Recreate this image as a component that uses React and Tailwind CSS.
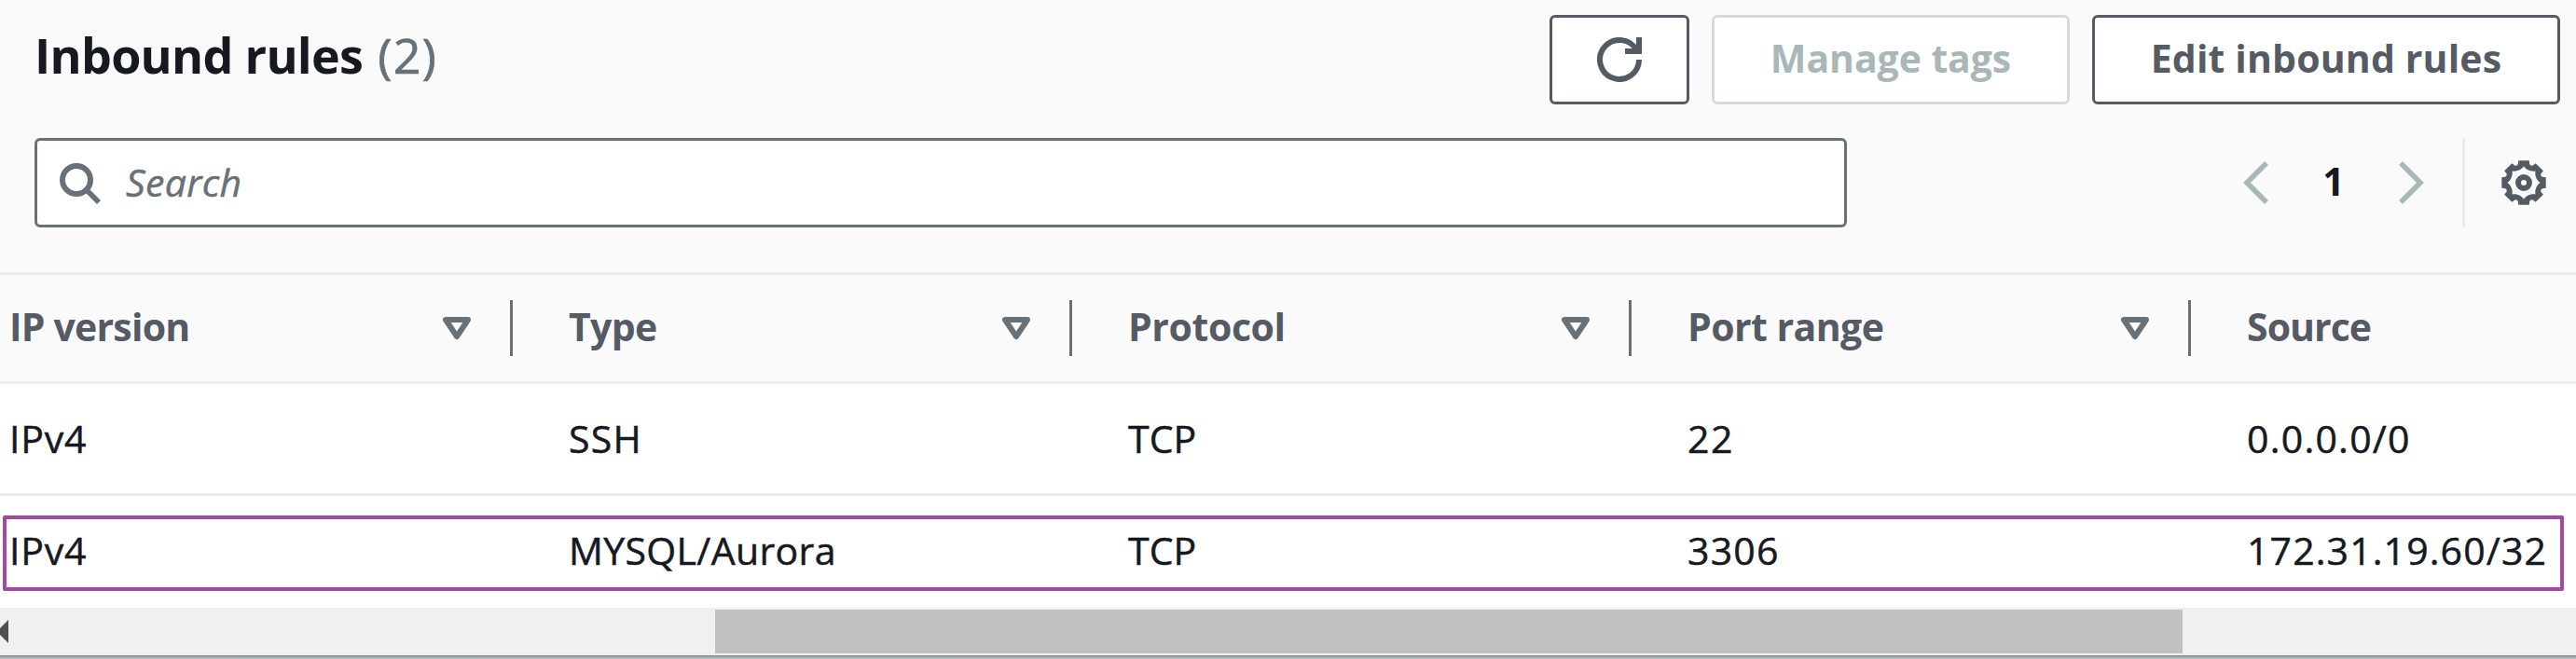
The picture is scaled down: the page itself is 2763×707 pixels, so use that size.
import React from "react";

const columns = [
  { label: "IP version", width: "w-[550px] pl-[10px]", tracking: "tracking-[-0.8px]" },
  { label: "Type", width: "w-[600px] pl-[60px]", tracking: "tracking-[-0.67px]" },
  { label: "Protocol", width: "w-[600px] pl-[60px]", tracking: "tracking-[-0.4px]" },
  { label: "Port range", width: "w-[600px] pl-[60px]", tracking: "tracking-[-0.55px]" },
  { label: "Source", width: "w-[413px] pl-[60px]", tracking: "tracking-[-0.95px]" },
];

const rows = [
  [
    { text: "IPv4", tracking: "tracking-[0.8px]" },
    { text: "SSH", tracking: "tracking-[1.3px]" },
    { text: "TCP", tracking: "tracking-[0.05px]" },
    { text: "22", tracking: "tracking-[1.5px]" },
    { text: "0.0.0.0/0", tracking: "tracking-[1.25px]" },
  ],
  [
    { text: "IPv4", tracking: "tracking-[0.8px]" },
    { text: "MYSQL/Aurora", tracking: "tracking-[0.35px]" },
    { text: "TCP", tracking: "tracking-[0.05px]" },
    { text: "3306", tracking: "tracking-[1.22px]" },
    { text: "172.31.19.60/32", tracking: "tracking-[1.12px]" },
  ],
];

const TEETH = [0, 1, 2, 3, 4, 5, 6, 7];

function rotated(k, x, y) {
  const a = (k * Math.PI) / 4;
  const px = 24 + x * Math.cos(a) - y * Math.sin(a);
  const py = 24 + x * Math.sin(a) + y * Math.cos(a);
  return px.toFixed(2) + " " + py.toFixed(2);
}

const gearOuter =
  TEETH.map(
    (k) =>
      (k === 0 ? "M" : "L") + rotated(k, -5.8, -23.7) +
      "L" + rotated(k, 5.8, -23.7) +
      "L" + rotated(k, 6.2, -20) +
      "Q" + rotated(k, 7.3, -17.6) + " " + rotated(k, 9.7, -18.5)
  ).join("") + "Z";

const gearInner =
  "M" + rotated(0, 0, -17.7) +
  TEETH.map(
    (k) => "C" + rotated(k, 2.5, -13.7) + " " + rotated(k, 7.9, -11.5) + " " + rotated(k + 1, 0, -17.7)
  ).join("") + "Z";

function GearIcon() {
  return (
    <svg className="size-12 shrink-0 text-[#545b64]" viewBox="0 0 48 48">
      <path d={gearOuter + gearInner} fill="currentColor" fillRule="evenodd" />
      <circle cx="24" cy="24" r="6" fill="none" stroke="currentColor" strokeWidth="6" />
    </svg>
  );
}

function RefreshIcon() {
  return (
    <svg className="size-12" viewBox="0 0 48 48" fill="none" stroke="currentColor" strokeWidth="6">
      <path d="M45 24A21 21 0 1 1 42.6 14.2" />
      <path d="M45 0V15H30" />
    </svg>
  );
}

function SearchIcon() {
  return (
    <svg className="size-12 shrink-0 text-[#687078]" viewBox="0 0 48 48" fill="none" stroke="currentColor" strokeWidth="6">
      <circle cx="21" cy="21" r="15" />
      <path d="M31 31L45 45" strokeWidth="5.6" />
    </svg>
  );
}

function Chevron({ d }) {
  return (
    <svg className="h-12 w-[30px] text-[#aab7b8]" viewBox="0 0 30 48" fill="none" stroke="currentColor" strokeWidth="5.6">
      <path d={d} />
    </svg>
  );
}

function SortIcon() {
  return (
    <svg className="h-[26px] w-8 text-[#687078]" viewBox="0 0 32 26" fill="none" stroke="currentColor" strokeWidth="6" strokeLinejoin="round">
      <path d="M4 4H28L16 22Z" />
    </svg>
  );
}

export default function App() {
  return (
    <div className="flex h-[707px] w-[2763px] flex-col overflow-hidden bg-white font-['Open_Sans',sans-serif] text-[41px] text-[#16191f]">
      <header className="flex h-[295px] shrink-0 flex-col border-b-[3px] border-[#eaeded] bg-[#fafafa] pt-4 pl-[37px]">
        <div className="flex h-24 items-start justify-between pr-[17px]">
          <h1 className="flex h-[86px] items-center gap-[16px] text-[52px] leading-[86px]">
            <span className="font-bold tracking-[-0.72px]">Inbound rules</span>
            <span className="tracking-[1.2px] text-[#687078] [-webkit-text-stroke:0.7px]">(2)</span>
          </h1>
          <div className="flex h-24 gap-6 font-bold leading-[86px]">
            <button className="flex h-24 w-[150px] items-center justify-center rounded-[6px] border-[3px] border-[#545b64] bg-white text-[#545b64]">
              <RefreshIcon />
            </button>
            <button className="h-24 w-96 rounded-[6px] border-[3px] border-[#d5dbdb] bg-white pb-1 tracking-[-0.09px] text-[#aab7b8]">
              Manage tags
            </button>
            <button className="h-24 w-[502px] rounded-[6px] border-[3px] border-[#545b64] bg-white pb-1 tracking-[0.15px] text-[#545b64]">
              Edit inbound rules
            </button>
          </div>
        </div>
        <div className="mt-9 flex h-24">
          <div className="flex w-[1944px] items-center gap-[26px] rounded-[6px] border-[3px] border-[#687078] bg-white pl-[21px]">
            <SearchIcon />
            <span className="pb-px tracking-[0.3px] text-[#687078] italic [-webkit-text-stroke:0.5px]">Search</span>
          </div>
          <div className="ml-[425px] flex items-center">
            <Chevron d="M25 3L4 24L25 45" />
            <span className="w-[134px] pb-[2px] text-center font-bold">1</span>
            <Chevron d="M5 3L26 24L5 45" />
          </div>
          <div className="ml-[41px] w-[3px] bg-[#eaeded]" />
          <div className="ml-[39px] flex items-center">
            <GearIcon />
          </div>
        </div>
      </header>

      <div className="relative flex shrink-0 flex-col">
        <div className="flex h-[117px] border-b-[3px] border-[#eaeded] bg-[#fafafa]">
          {columns.map((c, i) => (
            <div key={c.label} className={"flex shrink-0 items-center justify-between " + c.width}>
              <span className={"pb-[2px] font-bold text-[#545b64] " + c.tracking}>{c.label}</span>
              {i < 4 && (
                <div className="flex items-center gap-[41px]">
                  <SortIcon />
                  <div className="h-[60px] w-[3px] bg-[#687078]" />
                </div>
              )}
            </div>
          ))}
        </div>
        {rows.map((row, r) => (
          <div key={r} className={"flex h-[120px] border-b-[3px] [-webkit-text-stroke:0.5px] " + (r === 0 ? "border-[#eaeded]" : "border-white")}>
            {row.map((cell, i) => (
              <div key={i} className={"flex shrink-0 items-center " + columns[i].width}>
                <span className={cell.tracking}>{cell.text}</span>
              </div>
            ))}
          </div>
        ))}
        <div className="absolute top-[258px] left-[3px] h-[81px] w-[2747px] rounded-[2px] border-4 border-[#a349a4]" />
      </div>

      <div className="flex h-[51px] shrink-0 items-center bg-[#f0f0f0]">
        <svg className="h-[26px] w-[9px]" viewBox="0 0 9 26">
          <path d="M9 0V25L-3.5 12.5Z" fill="#505050" />
        </svg>
        <div className="ml-[758px] h-[47px] w-[1574px] bg-[#c1c1c1]" />
      </div>
      <div className="h-1 shrink-0 bg-linear-to-b from-[#7f898e] to-[#c4cacc]" />
    </div>
  );
}
